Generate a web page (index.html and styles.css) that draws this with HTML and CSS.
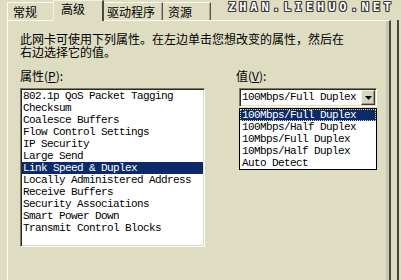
FILE: index.html
```html
<!DOCTYPE html>
<html lang="zh-CN">
<head>
<meta charset="utf-8">
<title>高级</title>
<link rel="stylesheet" href="styles.css">
</head>
<body>
<div class="window">
  <div class="tabbar">
    <div class="tab t1">常规</div>
    <div class="tab active">高级</div>
    <div class="tab t3">驱动程序</div>
    <div class="tab t4">资源</div>
    <div class="watermark">ZHAN.LIEHUO.NET</div>
  </div>
  <div class="main">
    <div class="panel">
      <p class="desc">此网卡可使用下列属性。在左边单击您想改变的属性，然后在<br>右边选择它的值。</p>
      <div class="cols">
        <div class="col-left">
          <div class="label">属性(<u>P</u>):</div>
          <ul class="listbox">
            <li>802.1p QoS Packet Tagging</li>
            <li>Checksum</li>
            <li>Coalesce Buffers</li>
            <li>Flow Control Settings</li>
            <li>IP Security</li>
            <li>Large Send</li>
            <li class="sel">Link Speed &amp; Duplex</li>
            <li>Locally Administered Address</li>
            <li>Receive Buffers</li>
            <li>Security Associations</li>
            <li>Smart Power Down</li>
            <li>Transmit Control Blocks</li>
          </ul>
        </div>
        <div class="col-right">
          <div class="label">值(<u>V</u>):</div>
          <div class="combo">
            <span class="combo-text">100Mbps/Full Duplex</span>
            <span class="combo-btn"><svg width="7" height="4" viewBox="0 0 7 4"><path d="M0 0H7L3.5 4Z" fill="#000"/></svg></span>
          </div>
          <ul class="dropdown">
            <li class="sel">100Mbps/Full Duplex</li>
            <li>100Mbps/Half Duplex</li>
            <li>10Mbps/Full Duplex</li>
            <li>10Mbps/Half Duplex</li>
            <li>Auto Detect</li>
          </ul>
        </div>
      </div>
    </div>
    <div class="edge"></div>
  </div>
</div>
</body>
</html>
```
FILE: styles.css
```css
html, body {
  margin: 0;
  padding: 0;
  background: #dedcc1;
  overflow: hidden;
}
body {
  width: 401px;
  height: 280px;
  font-family: "Noto Sans CJK SC", "Liberation Sans", sans-serif;
  font-size: 12px;
  color: #000;
}
.window {
  display: flex;
  flex-direction: column;
}
.tabbar {
  display: flex;
  align-items: flex-end;
  height: 20px;
  padding-left: 7px;
  position: relative;
  z-index: 1;
}
.tab {
  box-sizing: border-box;
  height: 18px;
  line-height: 17px;
  border-top: 1px solid #fbfaf0;
  border-left: 1px solid #fbfaf0;
  border-right: 1px solid #55534a;
  box-shadow: inset -1px 0 #a9a792;
  white-space: nowrap;
}
.t1 { width: 46px; padding-left: 5px; border-right: none; box-shadow: none; }
.active {
  width: 51px;
  height: 21px;
  margin-bottom: -1px;
  padding-left: 7px;
  line-height: 15px;
  border-top-color: #f2f1e4;
  border-left-color: #f2f1e4;
  border-right: 2px solid #4a493f;
  box-shadow: none;
  background: #dedcc1;
}
.t3 { width: 59px; padding-left: 3px; border-left: none; }
.t4 { width: 48px; padding-left: 5px; border-left: none; }
.watermark {
  align-self: flex-start;
  margin: 1px 6px 0 auto;
  font-family: "DejaVu Sans Mono", monospace;
  font-weight: bold;
  font-size: 12px;
  line-height: 12px;
  letter-spacing: 3.9px;
  color: #fff;
  text-shadow: 1px 0 #3c3b36, -1px 0 #3c3b36, 0 1px #3c3b36, 0 -1px #3c3b36,
               1px 1px #3c3b36, -1px -1px #3c3b36, 1px -1px #3c3b36, -1px 1px #3c3b36;
}
.main {
  display: flex;
  height: 260px;
}
.panel {
  box-sizing: border-box;
  width: 384px;
  margin-left: 7px;
  padding: 11px 0 0 12px;
  border-top: 1px solid #fbfaf0;
  border-left: 1px solid #fbfaf0;
  border-right: 2px solid #4a493f;
  box-shadow: inset -3px 0 #c9c7ad;
}
.desc {
  margin: 0;
  line-height: 13px;
}
.cols {
  display: flex;
  margin-top: 11px;
}
.col-left { width: 185px; }
.col-right { margin-left: 31px; }
.label {
  line-height: 13px;
  margin-bottom: 6px;
  white-space: nowrap;
}
.label u { text-decoration-thickness: 1px; text-underline-offset: 1px; }
.listbox, .dropdown {
  list-style: none;
  margin: 0;
  padding: 0;
  font-family: "Liberation Mono", monospace;
  font-size: 11px;
  letter-spacing: -0.6px;
  background: #fff;
}
.listbox {
  box-sizing: border-box;
  width: 185px;
  height: 159px;
  padding: 1px;
  border: 1px solid;
  border-color: #7d7b6c #fff #fff #7d7b6c;
  box-shadow: inset 1px 1px #2a2925, inset -1px -1px #dddbc4;
}
.listbox li {
  height: 12px;
  line-height: 12px;
  padding-left: 1px;
  white-space: nowrap;
}
.sel {
  background: #0c2a6a;
  color: #fff;
}
.combo {
  box-sizing: border-box;
  display: flex;
  align-items: center;
  width: 138px;
  height: 19px;
  margin-left: 3px;
  padding: 1px;
  border: 1px solid;
  border-color: #7d7b6c #fff #fff #7d7b6c;
  box-shadow: inset 1px 1px #2a2925, inset -1px -1px #dddbc4;
  background: #fff;
}
.combo-text {
  flex: 1;
  padding-left: 1px;
  font-family: "Liberation Mono", monospace;
  font-size: 11px;
  letter-spacing: -0.6px;
  line-height: 15px;
  white-space: nowrap;
}
.combo-btn {
  box-sizing: border-box;
  display: flex;
  align-items: center;
  justify-content: center;
  width: 14px;
  height: 15px;
  background: #d8d5bf;
  border: 1px solid;
  border-color: #f4f3e8 #3b3a33 #3b3a33 #f4f3e8;
  box-shadow: inset -1px -1px #9c9a86;
}
.dropdown {
  box-sizing: border-box;
  width: 138px;
  margin: 1px 0 0 3px;
  border: 1px solid #000;
}
.dropdown li {
  height: 12px;
  line-height: 12px;
  padding-left: 2px;
  white-space: nowrap;
}
.dropdown li.sel {
  box-sizing: border-box;
  padding-left: 1px;
  border: 1px dotted #e8df8a;
  line-height: 10px;
}
.edge {
  width: 2px;
  margin-left: 6px;
  background: #45443b;
}
```
